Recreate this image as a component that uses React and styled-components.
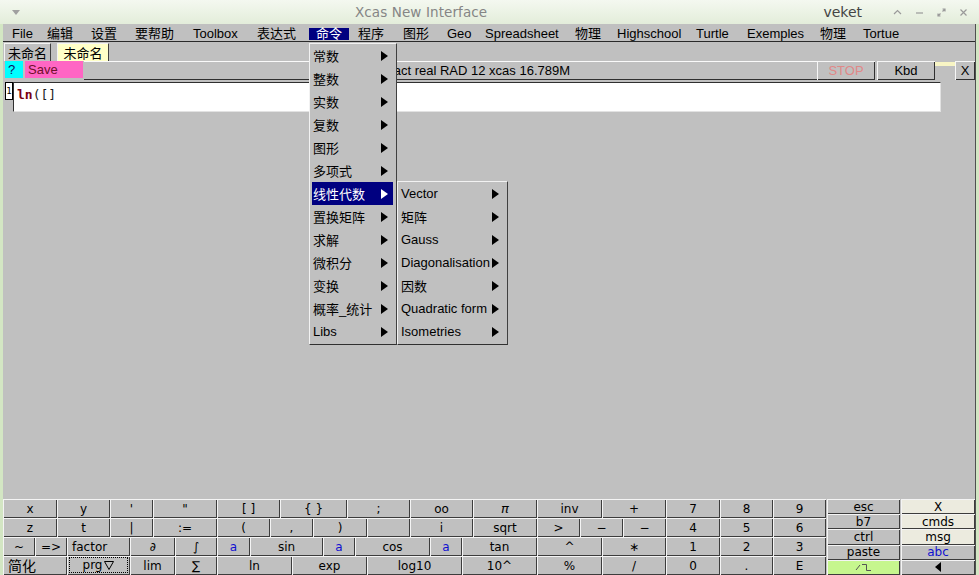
import React from 'react'
import styled, { createGlobalStyle } from 'styled-components'

const GlobalStyle = createGlobalStyle`
  html, body {
    margin: 0;
    padding: 0;
    background: #c0c0c0;
  }
`

const Window = styled.div`
  position: relative;
  width: 979px;
  height: 575px;
  overflow: hidden;
  display: flex;
  flex-direction: column;
  background: #d3e6c3;
  font-family: "Liberation Sans", "Noto Sans CJK SC", sans-serif;
  font-size: 13px;
  color: #000;
`

const TitleBar = styled.div`
  height: 24px;
  flex: none;
  display: flex;
  align-items: center;
  background: linear-gradient(#f4f8f0, #e3edda);
  font-family: "DejaVu Sans", sans-serif;
`

const TitleLead = styled.div`
  width: 355px;
  flex: none;
  box-sizing: border-box;
  padding-left: 12px;
  display: flex;
  align-items: center;
`

const TitleText = styled.span`
  color: #858585;
  font-size: 13.5px;
  letter-spacing: 0.1px;
`

const UserName = styled.span`
  margin-left: auto;
  margin-right: 31px;
  color: #444;
  font-size: 14px;
`

const WinButtons = styled.div`
  display: flex;
  align-items: center;
  gap: 13px;
  margin-right: 11px;
`

const Body = styled.div`
  flex: 1;
  min-height: 0;
  display: flex;
  flex-direction: column;
  margin: 0 3px;
  background: #c0c0c0;
  border-right: 1px solid #505050;
`

const MenuBar = styled.div`
  height: 18px;
  flex: none;
  display: flex;
  align-items: center;
  padding-left: 2px;
  padding-top: 1px;
  box-sizing: border-box;
  border-bottom: 1px solid #2a2a2a;
`

const MenuItem = styled.div`
  width: ${p => p.$w}px;
  flex: none;
  white-space: nowrap;
`

const MenuLabel = styled.span`
  display: inline-block;
  padding: 0 7px;
  line-height: 12px;
  background: ${p => (p.$active ? '#000080' : 'transparent')};
  color: ${p => (p.$active ? '#fff' : '#000')};
`

const TabRow = styled.div`
  height: 19px;
  flex: none;
  display: flex;
  align-items: flex-end;
  gap: 6px;
  padding-left: 1px;
`

const Tab = styled.div`
  width: ${p => p.$w}px;
  height: 18px;
  box-sizing: border-box;
  display: flex;
  align-items: center;
  justify-content: center;
  background: ${p => (p.$active ? '#ffffc8' : '#c0c0c0')};
  border-top: 1px solid #f4f4f4;
  border-left: 1px solid #f4f4f4;
  border-right: 1px solid #404040;
`

const ToolRow = styled.div`
  height: 20px;
  flex: none;
  display: flex;
  align-items: flex-start;
`

const ColorButton = styled.div`
  width: ${p => p.$w}px;
  height: 17px;
  margin-left: 2px;
  flex: none;
  box-sizing: border-box;
  padding-left: 3px;
  display: flex;
  align-items: center;
  background: ${p => p.$bg};
  color: ${p => p.$color};
`

const StatusField = styled.div`
  flex: 1;
  height: 19px;
  margin-left: 1px;
  box-sizing: border-box;
  border-top: 1px solid #fafafa;
  border-bottom: 1px solid #303030;
  padding-left: 296px;
  display: flex;
  align-items: center;
  white-space: nowrap;
  overflow: hidden;
`

const BevelButton = styled.div`
  width: ${p => p.$w}px;
  height: 19px;
  flex: none;
  margin-left: ${p => p.$gap || 0}px;
  box-sizing: border-box;
  display: flex;
  align-items: center;
  justify-content: center;
  color: ${p => p.$color || '#000'};
  box-shadow: inset 1px 1px #f6f6f6, inset -1px -1px #303030;
`

const ToolGap = styled.div`
  width: 20px;
  flex: none;
  height: 4px;
  margin-top: 1px;
  background: #f8f5c4;
`

const EntryRow = styled.div`
  height: 31px;
  flex: none;
  display: flex;
  align-items: flex-start;
  padding: 1px 0 0 2px;
  box-sizing: border-box;
`

const LineNo = styled.div`
  width: 8px;
  height: 18px;
  box-sizing: border-box;
  border: 1px solid #000;
  background: #fff;
  display: flex;
  align-items: center;
  justify-content: center;
  font-family: "DejaVu Sans Mono", monospace;
  font-size: 9px;
`

const Entry = styled.div`
  width: 928px;
  height: 30px;
  box-sizing: border-box;
  background: #fff;
  border-top: 1px solid #303030;
  border-left: 1px solid #303030;
  border-right: 1px solid #e2e2e2;
  border-bottom: 1px solid #e2e2e2;
  padding: 4px 3px 0;
  font-family: "DejaVu Sans Mono", monospace;
  font-size: 13px;
  line-height: 16px;
  color: #222;
`

const Fn = styled.span`
  color: #7a0010;
  font-weight: bold;
`

const Workspace = styled.div`
  flex: 1;
`

const Keyboard = styled.div`
  height: 76px;
  flex: none;
  display: flex;
  gap: 1px;
  font-family: "DejaVu Sans", "Noto Sans CJK SC", sans-serif;
  font-size: 12px;
`

const KeyGrid = styled.div`
  width: 823px;
  flex: none;
  display: flex;
  flex-direction: column;
`

const KeyRow = styled.div`
  height: 19px;
  display: flex;
`

const Key = styled.div`
  width: ${p => p.$w}px;
  flex: none;
  box-sizing: border-box;
  display: flex;
  align-items: center;
  justify-content: ${p => (p.$left ? 'flex-start' : 'center')};
  padding: ${p => (p.$left ? '0 0 0 5px' : '0')};
  background: ${p => p.$bg || '#c0c0c0'};
  color: ${p => p.$color || '#000'};
  font-style: ${p => (p.$italic ? 'italic' : 'normal')};
  font-size: ${p => p.$fs || 12}px;
  line-height: 1;
  white-space: nowrap;
  box-shadow: inset 1px 1px #f4f4f4, inset -1px -1px #3c3c3c;
`

const Focus = styled.span`
  flex: 1;
  align-self: stretch;
  margin: 1px 2px 2px 2px;
  border: 1px dotted #000;
  display: flex;
  align-items: center;
  justify-content: center;
  gap: 2px;
`

const SideColumn = styled.div`
  width: ${p => p.$w}px;
  flex: none;
  display: flex;
  flex-direction: column;
`

const SideKey = styled(Key)`
  width: auto;
  flex: 1 1 0;
`

const Dropdown = styled.div`
  position: absolute;
  left: ${p => p.$x}px;
  top: ${p => p.$y}px;
  width: ${p => p.$w}px;
  box-sizing: border-box;
  padding: 0 3px 1px 2px;
  background: #c0c0c0;
  border: 1px solid;
  border-color: #f2f2f2 #404040 #303030 #f2f2f2;
  z-index: 10;
`

const DropItem = styled.div`
  height: 23px;
  display: flex;
  align-items: center;
  justify-content: space-between;
  padding: 0 5px 0 1px;
  white-space: nowrap;
  background: ${p => (p.$active ? '#000080' : 'transparent')};
  color: ${p => (p.$active ? '#fff' : '#000')};
`

const Arrow = styled.span`
  width: 0;
  height: 0;
  flex: none;
  border-top: 5px solid transparent;
  border-bottom: 5px solid transparent;
  border-left: 7px solid currentColor;
`

const LeftTriangle = styled.span`
  width: 0;
  height: 0;
  border-top: 5px solid transparent;
  border-bottom: 5px solid transparent;
  border-right: 6px solid #000;
`

const menus = [
  ['File', 35], ['编辑', 44], ['设置', 44], ['要帮助', 58], ['Toolbox', 64],
  ['表达式', 59], ['命令', 42, true], ['程序', 45], ['图形', 44], ['Geo', 38],
  ['Spreadsheet', 90], ['物理', 42], ['Highschool', 79], ['Turtle', 51],
  ['Exemples', 73], ['物理', 43], ['Tortue', 60]
]

const commands = ['常数', '整数', '实数', '复数', '图形', '多项式', '线性代数', '置换矩阵', '求解', '微积分', '变换', '概率_统计', 'Libs']
const linalg = ['Vector', '矩阵', 'Gauss', 'Diagonalisation', '因数', 'Quadratic form', 'Isometries']

const blue = '#1010d0'

const rows = [
  [
    { t: 'x', w: 54 }, { t: 'y', w: 53 }, { t: "'", w: 43 }, { t: '"', w: 64 },
    { t: '[ ]', w: 63 }, { t: '{ }', w: 67 }, { t: ';', w: 63 }, { t: 'oo', w: 63 },
    { t: 'π', w: 64, italic: true, fs: 13 }, { t: 'inv', w: 65 }, { t: '+', w: 64 },
    { t: '7', w: 54 }, { t: '8', w: 53 }, { t: '9', w: 53 }
  ],
  [
    { t: 'z', w: 54 }, { t: 't', w: 53 }, { t: '|', w: 43 }, { t: ':=', w: 64 },
    { t: '(', w: 53 }, { t: ',', w: 43 }, { t: ')', w: 54 }, { t: '', w: 43 },
    { t: 'i', w: 63 }, { t: 'sqrt', w: 64 }, { t: '>', w: 43 }, { t: '−', w: 43 },
    { t: '−', w: 43 }, { t: '4', w: 54 }, { t: '5', w: 53 }, { t: '6', w: 53 }
  ],
  [
    { t: '~', w: 32 }, { t: '=>', w: 32 }, { t: 'factor', w: 63, left: true },
    { t: '∂', w: 45, italic: true }, { t: '∫', w: 42 }, { t: 'a', w: 33, color: blue },
    { t: 'sin', w: 73 }, { t: 'a', w: 32, color: blue }, { t: 'cos', w: 75 },
    { t: 'a', w: 32, color: blue }, { t: 'tan', w: 75 }, { t: '^', w: 65 }, { t: '∗', w: 64 },
    { t: '1', w: 54 }, { t: '2', w: 53 }, { t: '3', w: 53 }
  ],
  [
    { t: '简化', w: 64, left: true, fs: 14 }, { t: 'prg', w: 63, focus: true },
    { t: 'lim', w: 45 }, { t: '∑', w: 42 }, { t: 'ln', w: 75 }, { t: 'exp', w: 75 },
    { t: 'log10', w: 95 }, { t: '10^', w: 75 }, { t: '%', w: 65 }, { t: '/', w: 64 },
    { t: '0', w: 54 }, { t: '.', w: 53 }, { t: 'E', w: 53 }
  ]
]

const cream = '#ecebdf'

const StepIcon = () => (
  <svg width="18" height="10" viewBox="0 0 18 10">
    <path d="M1 8 L5 3" stroke="#555" strokeWidth="1" fill="none" />
    <path d="M7 2.5 H11.5 V8.5 H16" stroke="#555" strokeWidth="1" fill="none" />
  </svg>
)

const WinIcon = ({ d }) => (
  <svg width="9" height="9" viewBox="0 0 9 9">
    <path d={d} stroke="#9a9a9a" strokeWidth="1.2" fill="none" />
  </svg>
)

export default function App() {
  return (
    <>
      <GlobalStyle />
      <Window>
        <TitleBar>
          <TitleLead>
            <svg width="8" height="5" viewBox="0 0 8 5">
              <polygon points="0,0 8,0 4,5" fill="#a0a0a0" />
            </svg>
          </TitleLead>
          <TitleText>Xcas New Interface</TitleText>
          <UserName>veket</UserName>
          <WinButtons>
            <WinIcon d="M1 6 L4.5 2.5 L8 6" />
            <WinIcon d="M1 5 H8" />
            <WinIcon d="M1 8 L3.5 5.5 M1 5.5 V8 H3.5 M8 1 L5.5 3.5 M5.5 1 H8 V3.5" />
            <WinIcon d="M1.5 1.5 L7.5 7.5 M7.5 1.5 L1.5 7.5" />
          </WinButtons>
        </TitleBar>

        <Body>
          <MenuBar>
            {menus.map(([label, w, active], i) => (
              <MenuItem key={i} $w={w}>
                <MenuLabel $active={active}>{label}</MenuLabel>
              </MenuItem>
            ))}
          </MenuBar>

          <TabRow>
            <Tab $w={47}>未命名</Tab>
            <Tab $w={52} $active>未命名</Tab>
          </TabRow>

          <ToolRow>
            <ColorButton $w={18} $bg="#00ffff" $color="#101060">?</ColorButton>
            <ColorButton $w={58} $bg="#ff66c4" $color="#70102a">Save</ColorButton>
            <StatusField>exact real RAD 12 xcas 16.789M</StatusField>
            <BevelButton $w={58} $color="#e08888">STOP</BevelButton>
            <BevelButton $w={58} $gap={2}>Kbd</BevelButton>
            <ToolGap />
            <BevelButton $w={20}>X</BevelButton>
          </ToolRow>

          <EntryRow>
            <LineNo>1</LineNo>
            <Entry>
              <Fn>ln</Fn>([]
            </Entry>
          </EntryRow>

          <Workspace />

          <Keyboard>
            <KeyGrid>
              {rows.map((row, r) => (
                <KeyRow key={r}>
                  {row.map((k, i) => (
                    <Key
                      key={i}
                      $w={k.w}
                      $left={k.left}
                      $italic={k.italic}
                      $color={k.color}
                      $fs={k.fs}
                    >
                      {k.focus ? (
                        <Focus>
                          {k.t}
                          <svg width="10" height="9" viewBox="0 0 10 9">
                            <polygon points="0.5,0.5 9.5,0.5 5,8.5" stroke="#000" fill="none" />
                          </svg>
                        </Focus>
                      ) : (
                        k.t
                      )}
                    </Key>
                  ))}
                </KeyRow>
              ))}
            </KeyGrid>
            <SideColumn $w={73}>
              <SideKey>esc</SideKey>
              <SideKey>b7</SideKey>
              <SideKey>ctrl</SideKey>
              <SideKey>paste</SideKey>
              <SideKey $bg="#c6f68e">
                <StepIcon />
              </SideKey>
            </SideColumn>
            <SideColumn $w={74}>
              <SideKey $bg={cream}>X</SideKey>
              <SideKey $bg={cream}>cmds</SideKey>
              <SideKey $bg={cream}>msg</SideKey>
              <SideKey $color={blue}>abc</SideKey>
              <SideKey>
                <LeftTriangle />
              </SideKey>
            </SideColumn>
          </Keyboard>
        </Body>

        <Dropdown $x={309} $y={43} $w={88}>
          {commands.map((c, i) => (
            <DropItem key={i} $active={i === 6}>
              {c}
              <Arrow />
            </DropItem>
          ))}
        </Dropdown>

        <Dropdown $x={397} $y={181} $w={111}>
          {linalg.map((c, i) => (
            <DropItem key={i}>
              {c}
              <Arrow />
            </DropItem>
          ))}
        </Dropdown>
      </Window>
    </>
  )
}
